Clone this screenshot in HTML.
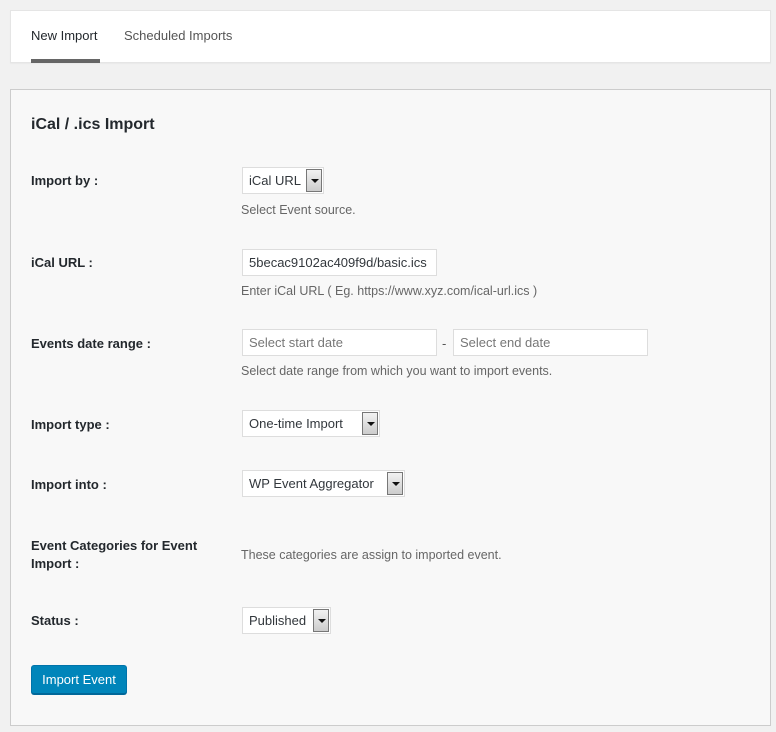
<!DOCTYPE html>
<html><head><style>
*{box-sizing:border-box;margin:0;padding:0}
body{width:776px;height:732px;background:#f1f1f1;font-family:"Liberation Sans",sans-serif;font-size:13px;color:#23282d;position:relative;overflow:hidden}
.abs{position:absolute;white-space:nowrap}
.top{position:absolute;left:10px;top:10px;width:761px;height:53px;background:#fff;border:1px solid #e5e5e5;box-shadow:0 1px 1px rgba(0,0,0,.04)}
.panel{position:absolute;left:10px;top:89px;width:761px;height:637px;background:#f8f8f8;border:1px solid #ccc}
.lbl{font-weight:bold;color:#23282d;font-size:13px}
.desc{color:#666;font-size:12.5px}
.inp{position:absolute;background:#fff;border:1px solid #ddd;height:27px;font-size:13px;line-height:25px;padding-left:6px;color:#32373c;white-space:nowrap;overflow:hidden}
.sel{position:absolute;background:#fff;border:1px solid #ddd;height:27px;font-size:13px;line-height:25px;padding-left:6px;color:#32373c;white-space:nowrap}
.sel .ar{position:absolute;right:1px;top:1px;width:16px;height:23px;border:1px solid #777;background:linear-gradient(#f2f2f2,#ccc)}
.sel .ar:after{content:"";position:absolute;left:4px;top:9px;border-left:4px solid transparent;border-right:4px solid transparent;border-top:4px solid #111}
.ph{color:#777}
</style></head><body>
<div class="top"></div>
<div class="abs" style="left:31px;top:28px;color:#23282d">New Import</div>
<div class="abs" style="left:31px;top:59px;width:69px;height:4px;background:#666"></div>
<div class="abs" style="left:124px;top:28px;color:#555">Scheduled Imports</div>
<div class="panel"></div>
<div class="abs" style="left:31px;top:116px;font-size:16px;font-weight:bold">iCal / .ics Import</div>

<div class="abs lbl" style="left:31px;top:173px">Import by :</div>
<div class="sel" style="left:242px;top:167px;width:82px">iCal URL<span class="ar"></span></div>
<div class="abs desc" style="left:241px;top:203px">Select Event source.</div>

<div class="abs lbl" style="left:31px;top:255px">iCal URL :</div>
<div class="inp" style="left:242px;top:249px;width:195px">5becac9102ac409f9d/basic.ics</div>
<div class="abs desc" style="left:241px;top:284px">Enter iCal URL ( Eg. https://www.xyz.com/ical-url.ics )</div>

<div class="abs lbl" style="left:31px;top:336px">Events date range :</div>
<div class="inp ph" style="left:242px;top:329px;width:195px">Select start date</div>
<div class="abs" style="left:442px;top:336px;color:#555">-</div>
<div class="inp ph" style="left:453px;top:329px;width:195px">Select end date</div>
<div class="abs desc" style="left:241px;top:364px">Select date range from which you want to import events.</div>

<div class="abs lbl" style="left:31px;top:417px">Import type :</div>
<div class="sel" style="left:242px;top:410px;width:138px">One-time Import<span class="ar"></span></div>

<div class="abs lbl" style="left:31px;top:477px">Import into :</div>
<div class="sel" style="left:242px;top:470px;width:163px">WP Event Aggregator<span class="ar"></span></div>

<div class="abs lbl" style="left:31px;top:537px;line-height:18px">Event Categories for Event<br>Import :</div>
<div class="abs desc" style="left:241px;top:548px">These categories are assign to imported event.</div>

<div class="abs lbl" style="left:31px;top:613px">Status :</div>
<div class="sel" style="left:242px;top:607px;width:89px">Published<span class="ar"></span></div>

<div class="abs" style="left:31px;top:665px;width:96px;height:29px;background:#0085ba;border:1px solid #0073aa;border-bottom-color:#006799;border-radius:3px;color:#fff;text-align:center;line-height:27px;box-shadow:0 1px 0 #006799">Import Event</div>
</body></html>
